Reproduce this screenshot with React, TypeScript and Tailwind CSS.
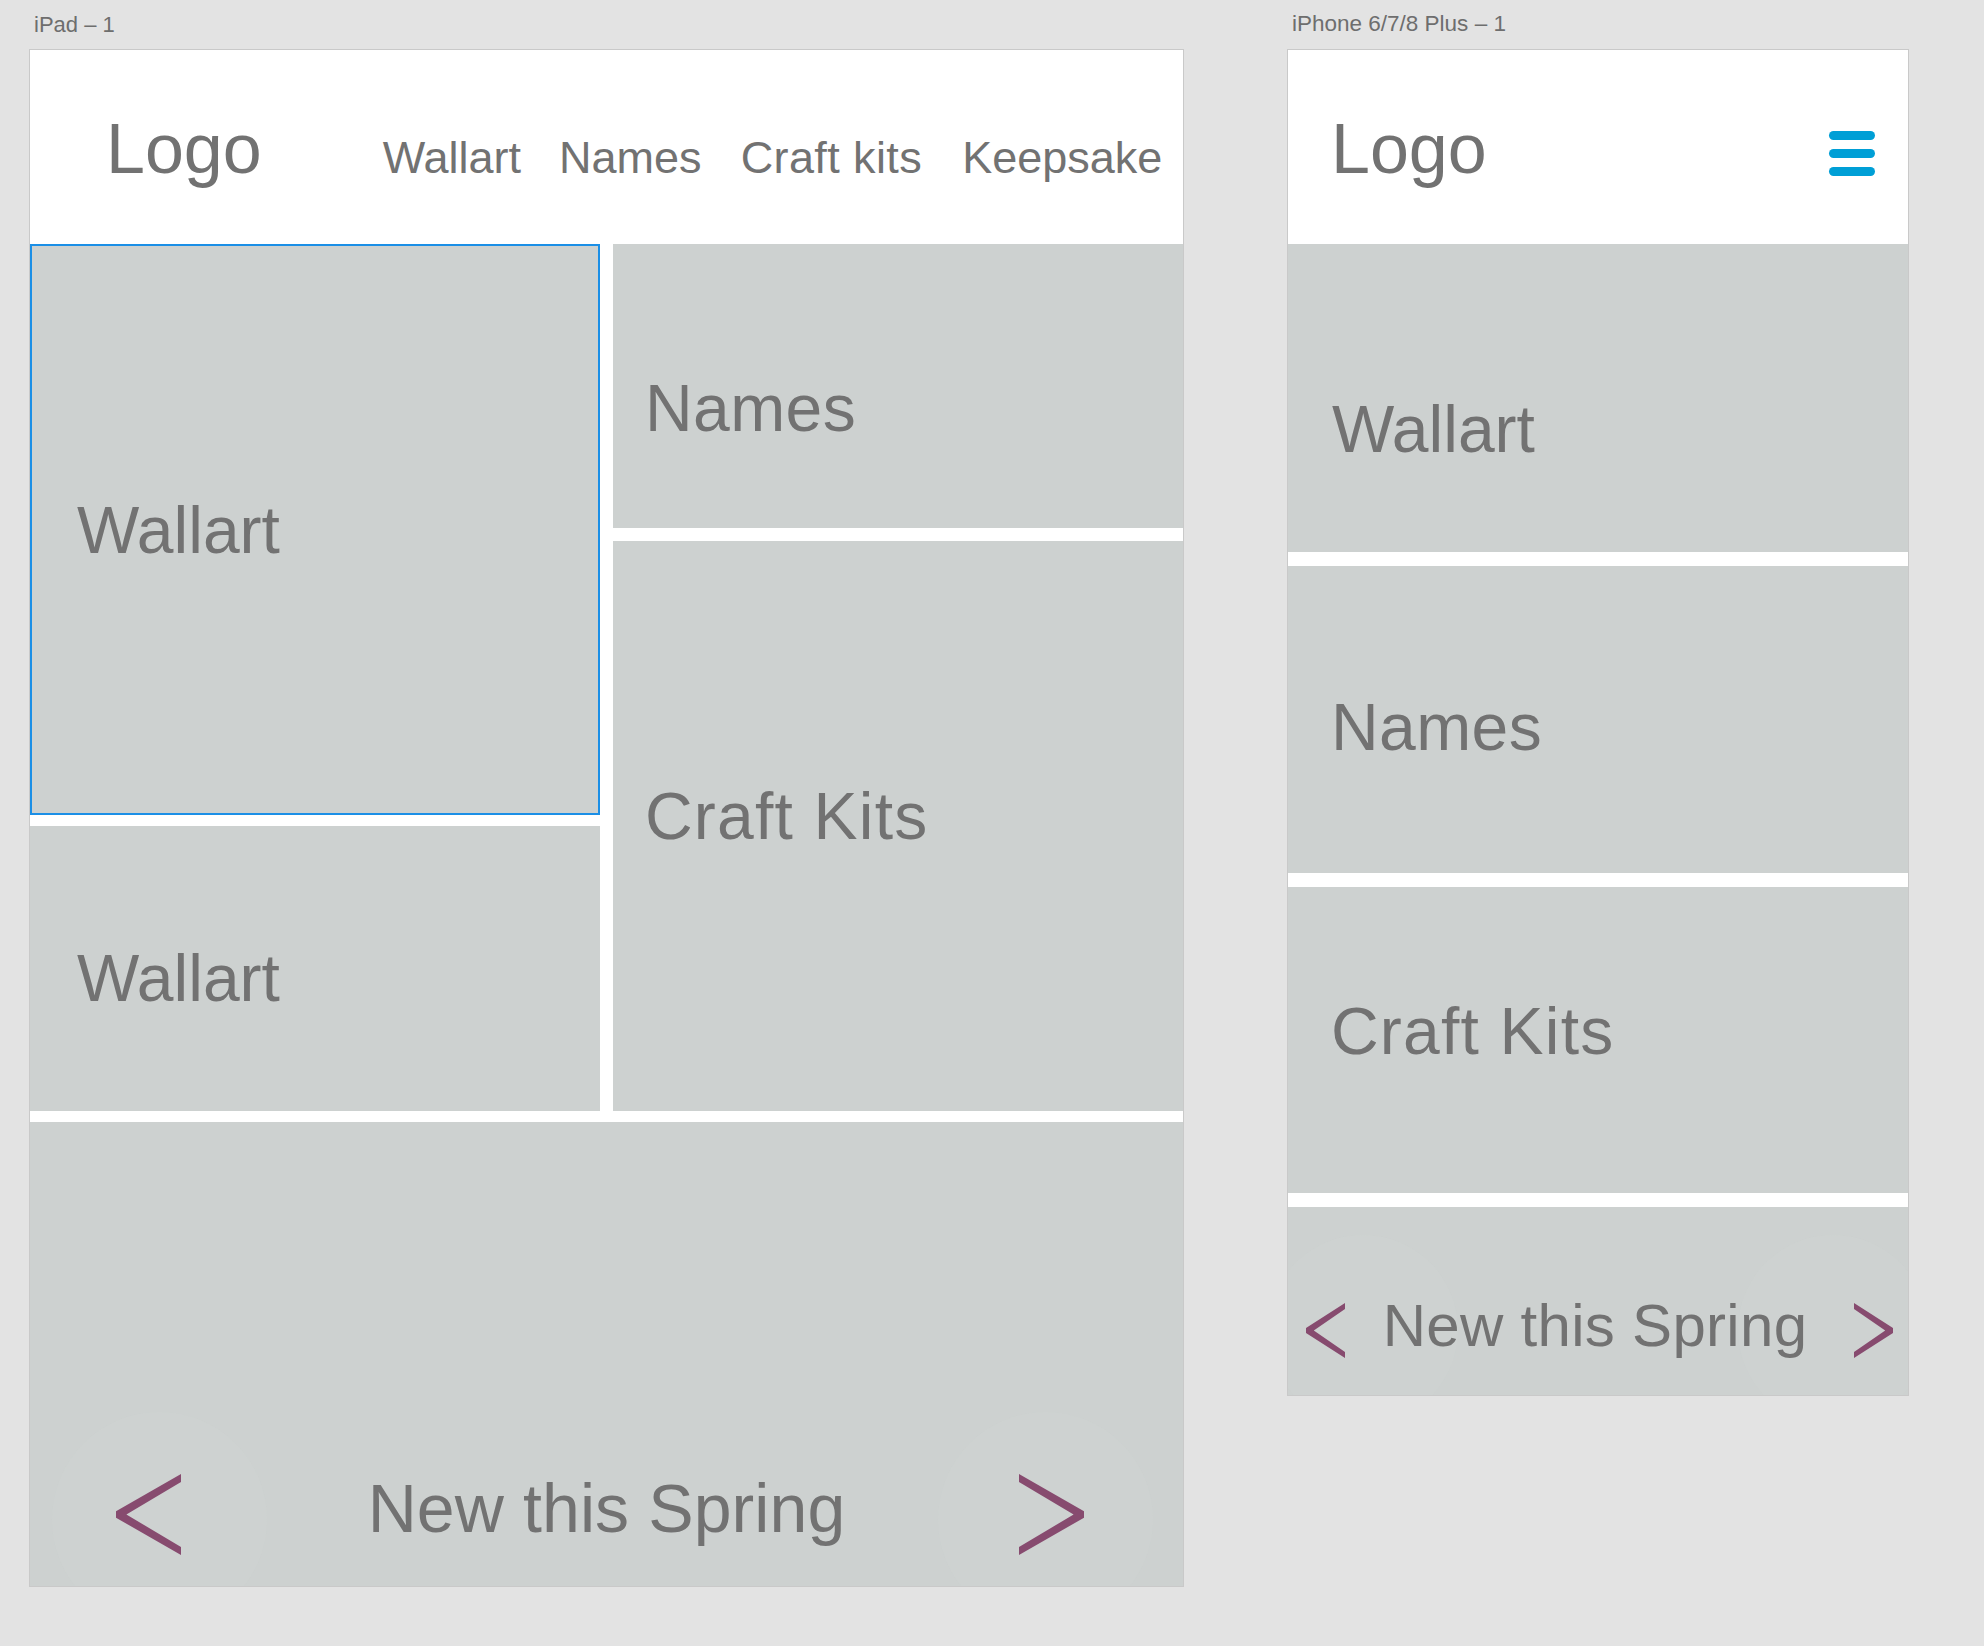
import React from "react";

const FONT = { fontFamily: '"Liberation Sans", Arial, sans-serif' };

function ChevronLeft({ w, h, t }: { w: number; h: number; t: number }) {
  const mid = h / 2;
  const flat = t * 0.4;
  const inset = t * 1.3;
  return (
    <svg width={w} height={h} viewBox={`0 0 ${w} ${h}`} className="block">
      <polygon
        fill="#874b6f"
        points={`${w},0 0,${mid - flat} 0,${mid + flat} ${w},${h} ${w},${h - t} ${inset},${mid} ${w},${t}`}
      />
    </svg>
  );
}

function ChevronRight({ w, h, t }: { w: number; h: number; t: number }) {
  return (
    <div className="-scale-x-100">
      <ChevronLeft w={w} h={h} t={t} />
    </div>
  );
}

function Tile({
  label,
  className,
  textClass,
}: {
  label: string;
  className: string;
  textClass: string;
}) {
  return (
    <div className={`bg-[#cdd1d0] flex items-center ${className}`}>
      <span className={`text-[66px] leading-none text-[#727272] whitespace-nowrap ${textClass}`}>{label}</span>
    </div>
  );
}

export default function App() {
  return (
    <div className="w-[1984px] h-[1646px] bg-[#e3e3e3] flex pl-[29px]" style={FONT}>
      {/* iPad artboard */}
      <div className="flex flex-col w-[1155px]">
        <div className="h-[49px] flex items-center pl-[5px] text-[22px] text-[#6e6e6e] leading-none">iPad – 1</div>
        <div className="border border-[#c9c9c9] bg-white h-[1538px] flex flex-col">
          {/* header */}
          <div className="h-[194px] flex items-baseline pt-[64px] pl-[76px] text-[#727272]">
            <span className="text-[70px] leading-none">Logo</span>
            <nav className="flex items-baseline ml-[121px] text-[45px] leading-none">
              <span>Wallart</span>
              <span className="ml-[38px]">Names</span>
              <span className="ml-[39px] tracking-[0.4px]">Craft kits</span>
              <span className="ml-[40px]">Keepsake</span>
            </nav>
          </div>
          {/* tiles */}
          <div className="h-[867px] flex gap-[13px]">
            <div className="w-[570px] flex flex-col gap-[11px]">
              <Tile
                label="Wallart"
                className="h-[571px] border-2 border-[#1b8fe6]"
                textClass="pl-[45px]"
              />
              <Tile label="Wallart" className="flex-1" textClass="pl-[47px] pt-[18px]" />
            </div>
            <div className="flex-1 flex flex-col gap-[13px]">
              <Tile label="Names" className="h-[284px]" textClass="pl-[32px] pt-[44px] tracking-[0.4px]" />
              <Tile label="Craft Kits" className="flex-1" textClass="pl-[32px] pb-[20px] tracking-[1.2px]" />
            </div>
          </div>
          {/* banner */}
          <div className="mt-[11px] flex-1 bg-[#cdd1d0] relative overflow-hidden flex flex-col justify-end pb-[31px]">
            <div className="absolute left-[22px] top-[290px] w-[215px] h-[215px] rounded-full bg-[#d0d4d3]/40" />
            <div className="absolute right-[30px] top-[290px] w-[215px] h-[215px] rounded-full bg-[#d0d4d3]/40" />
            <div className="relative grid grid-cols-[1fr_auto_1fr] items-start">
              <div className="flex justify-start pl-[86px]">
                <ChevronLeft w={65} h={81} t={8} />
              </div>
              <span className="text-[68px] leading-none text-[#727272] whitespace-nowrap tracking-[0.1px]">New this Spring</span>
              <div className="flex justify-end pr-[99px]">
                <ChevronRight w={65} h={81} t={8} />
              </div>
            </div>
          </div>
        </div>
      </div>

      {/* iPhone artboard */}
      <div className="flex flex-col w-[622px] ml-[103px]">
        <div className="h-[49px] flex items-center pl-[5px] text-[22.5px] text-[#6e6e6e] leading-none whitespace-nowrap">
          iPhone 6/7/8 Plus – 1
        </div>
        <div className="border border-[#c9c9c9] bg-white h-[1347px] flex flex-col">
          <div className="h-[194px] flex items-start justify-between pl-[43px] pr-[33px] text-[#727272]">
            <span className="text-[70px] leading-none pt-[64px]">Logo</span>
            <div className="mt-[81px] w-[46px] flex flex-col gap-[9px]">
              <div className="h-[9px] rounded-full bg-[#009fd6]" />
              <div className="h-[9px] rounded-full bg-[#009fd6]" />
              <div className="h-[9px] rounded-full bg-[#009fd6]" />
            </div>
          </div>
          <div className="flex-1 flex flex-col gap-[14px]">
            <Tile label="Wallart" className="h-[308px]" textClass="pl-[44px] pt-[62px]" />
            <Tile label="Names" className="h-[307px]" textClass="pl-[43px] pt-[14px] tracking-[0.4px]" />
            <Tile label="Craft Kits" className="h-[306px]" textClass="pl-[43px] pb-[18px] tracking-[1.2px]" />
            <div className="flex-1 bg-[#cdd1d0] relative overflow-hidden flex flex-col justify-end pb-[37px]">
              <div className="absolute -left-[20px] top-[28px] w-[190px] h-[190px] rounded-full bg-[#d0d4d3]/40" />
              <div className="absolute -right-[20px] top-[28px] w-[190px] h-[190px] rounded-full bg-[#d0d4d3]/40" />
              <div className="relative grid grid-cols-[1fr_auto_1fr] items-start">
                <div className="flex justify-start pl-[18px] pt-[7px]">
                  <ChevronLeft w={39} h={55} t={6} />
                </div>
                <span className="text-[60px] leading-none text-[#727272] whitespace-nowrap tracking-[0.3px] pr-[6px]">New this Spring</span>
                <div className="flex justify-end pr-[15px] pt-[7px]">
                  <ChevronRight w={39} h={55} t={6} />
                </div>
              </div>
            </div>
          </div>
        </div>
      </div>
    </div>
  );
}
